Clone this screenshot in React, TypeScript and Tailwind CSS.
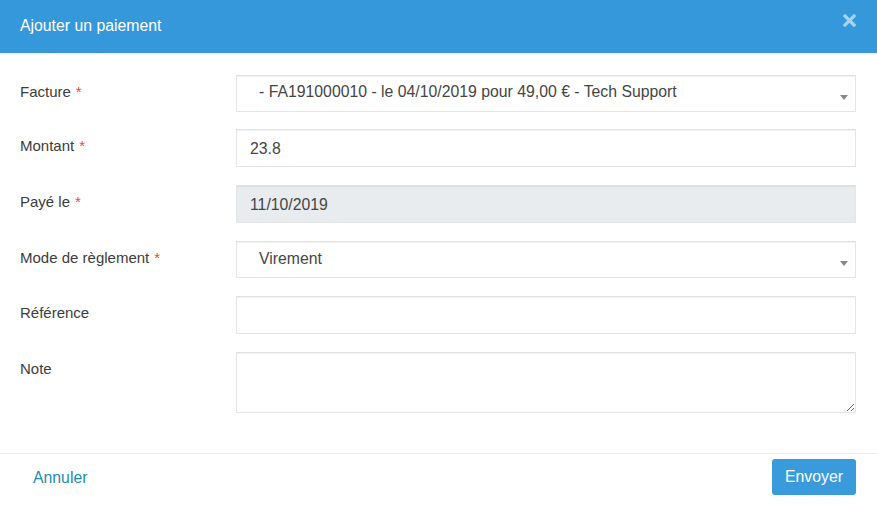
import React from "react";

const font = { fontFamily: '"Liberation Sans", Arial, sans-serif' };

function Label({ text, req }: { text: string; req?: boolean }) {
  return (
    <div className="w-[216px] shrink-0 pt-[7px] text-[15px] leading-[20px] text-[#3c3c3c]">
      {text}
      {req && <span className="ml-[5px] text-[#e74c3c]">*</span>}
    </div>
  );
}

function Caret() {
  return (
    <svg className="absolute right-[8px] top-1/2 mt-[1px]" width="8" height="5" viewBox="0 0 8 5">
      <path d="M0 0 L8 0 L4 5 Z" fill="#888" />
    </svg>
  );
}

export default function App() {
  const box =
    "w-full border border-[#e4e6e8] border-t-[#dfe1e3] shadow-[inset_0_1px_1px_rgba(0,0,0,0.06)] text-[15.8px] text-[#454545] outline-none";
  return (
    <div style={font} className="w-[877px] h-[511px] bg-white overflow-hidden">
      <div className="h-[53px] bg-[#3498db] flex items-start justify-between pl-[20px] pr-[20px]">
        <div className="pt-[16px] text-[15.8px] leading-[20px] text-white">Ajouter un paiement</div>
        <svg className="mt-[14px] mr-[1px]" width="13" height="13" viewBox="0 0 13 13">
          <path d="M2 2 L11 11 M11 2 L2 11" stroke="#a8d2f0" strokeWidth="3.2" strokeLinecap="square" />
        </svg>
      </div>

      <div className="pl-[20px] pr-[21px] pt-[22px] flex flex-col">
        <div className="flex">
          <Label text="Facture" req />
          <div className="relative flex-1">
            <div className={box + " h-[37px] pl-[22px] leading-[32px]"}>
              - FA191000010 - le 04/10/2019 pour 49,00 € - Tech Support
            </div>
            <Caret />
          </div>
        </div>

        <div className="flex mt-[17px]">
          <Label text="Montant" req />
          <div className="flex-1">
            <input className={box + " h-[38px] px-[13px] pt-[2px]"} defaultValue="23.8" />
          </div>
        </div>

        <div className="flex mt-[18px]">
          <Label text="Payé le" req />
          <div className="flex-1">
            <input
              className={box + " h-[38px] px-[13px] pt-[2px] bg-[#e8ecef]"}
              defaultValue="11/10/2019"
              readOnly
            />
          </div>
        </div>

        <div className="flex mt-[18px]">
          <Label text="Mode de règlement" req />
          <div className="relative flex-1">
            <div className={box + " h-[37px] pl-[22px] leading-[33px]"}>Virement</div>
            <Caret />
          </div>
        </div>

        <div className="flex mt-[18px]">
          <Label text="Référence" />
          <div className="flex-1">
            <input className={box + " h-[38px] px-[13px]"} />
          </div>
        </div>

        <div className="flex mt-[18px]">
          <Label text="Note" />
          <div className="flex-1 flex">
            <textarea className={box + " h-[61px] px-[13px] block"} />
          </div>
        </div>
      </div>

      <div className="mt-[40px] border-t border-[#ececec] flex items-start justify-between pl-[33px] pr-[21px] pt-[5px]">
        <div className="pt-[9px] text-[15.8px] leading-[20px] text-[#1f8bb2]">Annuler</div>
        <button className="h-[36px] w-[84px] rounded-[3px] bg-[#3a9bdc] text-white text-[15.8px] leading-[20px]">
          Envoyer
        </button>
      </div>
    </div>
  );
}
